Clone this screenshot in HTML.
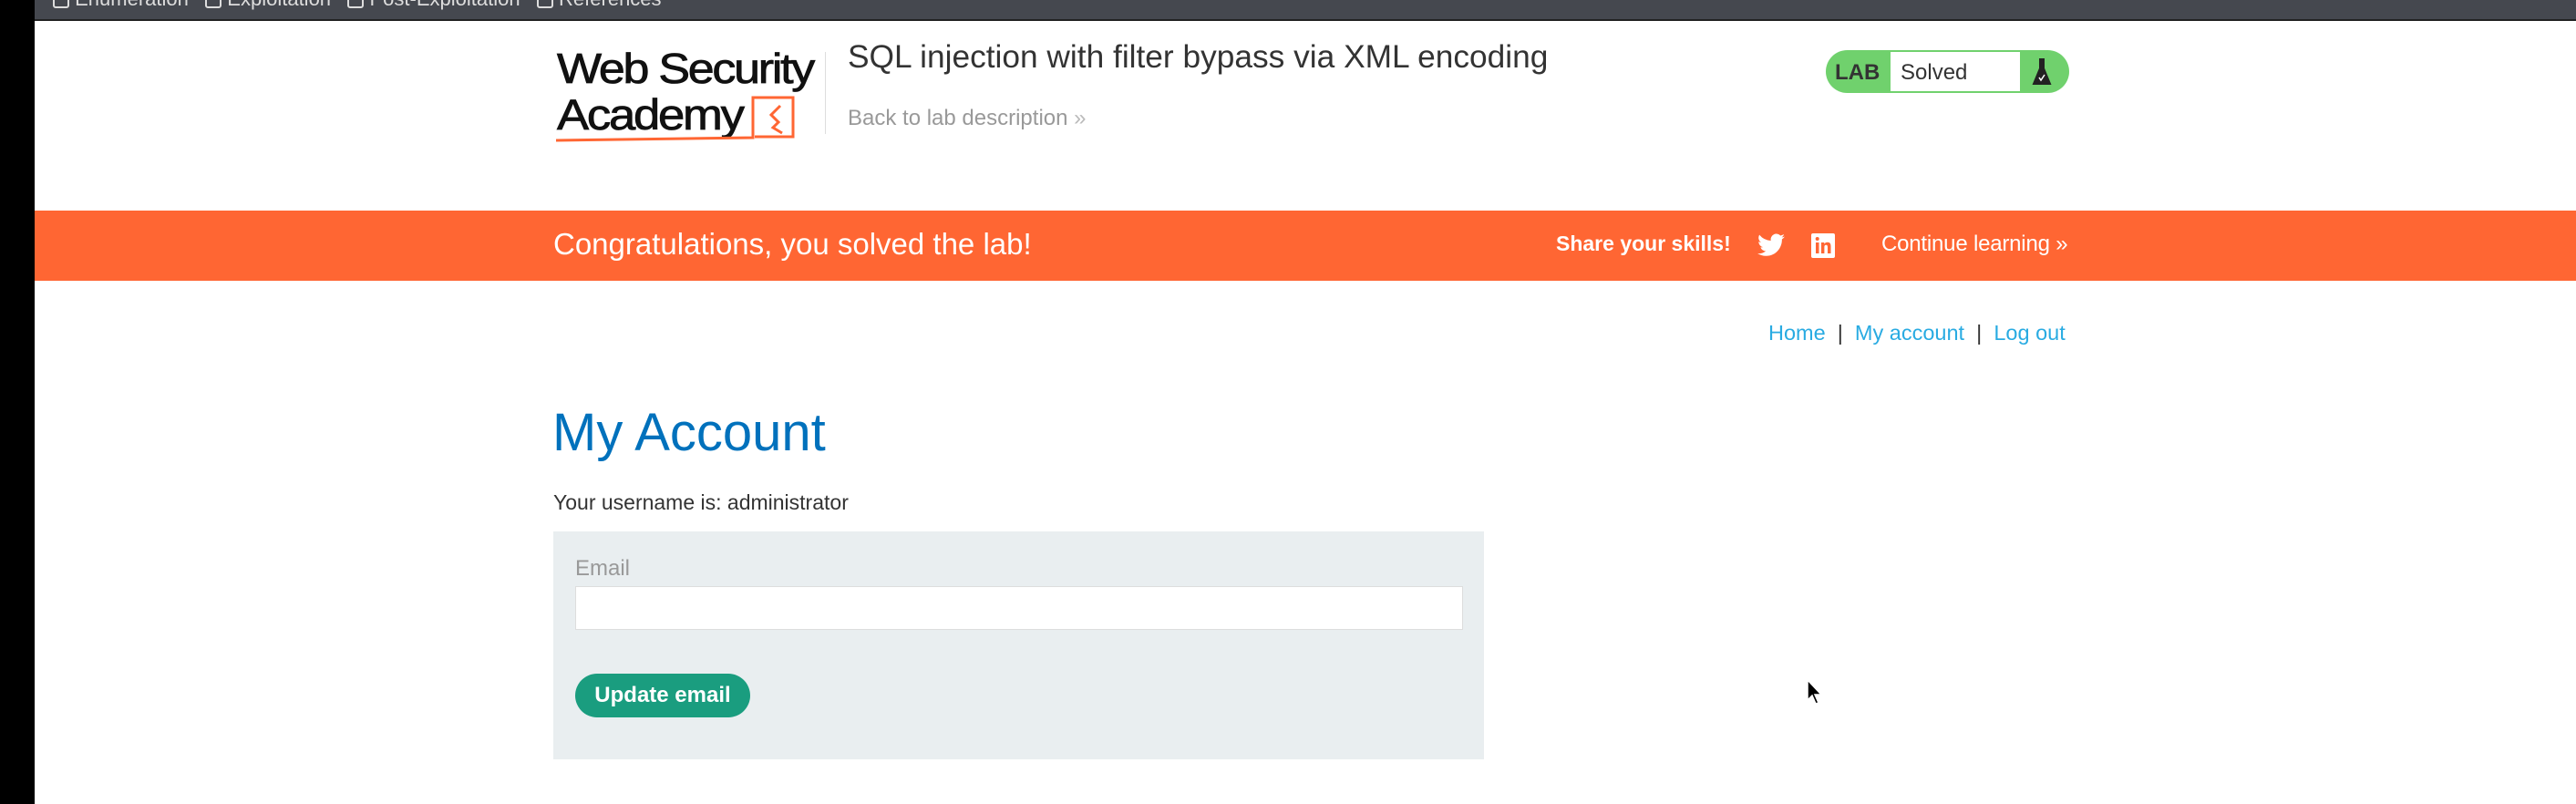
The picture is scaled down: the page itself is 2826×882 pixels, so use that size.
<!DOCTYPE html>
<html><head><meta charset="utf-8"><style>
*{margin:0;padding:0;box-sizing:border-box}
body{width:2826px;height:882px;background:#fff;position:relative;overflow:hidden;font-family:"Liberation Sans",sans-serif}
.a{position:absolute;white-space:nowrap}
</style></head><body>
<div class="a" style="left:0;top:0;width:38px;height:882px;background:#000"></div>
<div class="a" style="left:38px;top:0;width:2788px;height:23px;background:#45484f;border-bottom:2px solid #222"></div>
<div class="a" style="left:58px;top:-14px;font-size:22px;color:#ddd">
<span style="display:inline-block;width:18px;height:18px;border:2px solid #ddd;border-radius:3px;vertical-align:middle"></span> Enumeration&nbsp;&nbsp;
<span style="display:inline-block;width:18px;height:18px;border:2px solid #ddd;border-radius:3px;vertical-align:middle"></span> Exploitation&nbsp;&nbsp;
<span style="display:inline-block;width:18px;height:18px;border:2px solid #ddd;border-radius:3px;vertical-align:middle"></span> Post-Exploitation&nbsp;&nbsp;
<span style="display:inline-block;width:18px;height:18px;border:2px solid #ddd;border-radius:3px;vertical-align:middle"></span> References</div>

<div class="a" style="left:611px;top:52px;font-size:46px;letter-spacing:-2px;color:#111;line-height:46px;transform:scaleX(1.13);transform-origin:left;-webkit-text-stroke:0.8px #111">Web Security</div>
<div class="a" style="left:611px;top:102px;font-size:47px;letter-spacing:-2px;color:#111;line-height:47px;transform:scaleX(1.12);transform-origin:left;-webkit-text-stroke:0.8px #111">Academy</div>
<svg class="a" style="left:608px;top:104px" width="270" height="56"><path d="M2 50 L218 47 L218 3 L262 3 L262 46 L220 46" fill="none" stroke="#ff6633" stroke-width="3"/><path d="M248 12 L238 22 L246 30 L240 36 L250 42" fill="none" stroke="#ff6633" stroke-width="3"/></svg>
<div class="a" style="left:905px;top:57px;width:1px;height:90px;background:#ddd"></div>
<div class="a" style="left:930px;top:43px;font-size:35.3px;color:#333">SQL injection with filter bypass via XML encoding</div>
<div class="a" style="left:930px;top:116px;font-size:24px;color:#999">Back to lab description <span style="color:#bbb">»</span></div>

<div class="a" style="left:2003px;top:55px;width:267px;height:47px;background:#70d16d;border-radius:24px"></div>
<div class="a" style="left:2013px;top:66px;font-size:24px;font-weight:bold;color:#333">LAB</div>
<div class="a" style="left:2074px;top:57px;width:142px;height:43px;background:#fff"></div>
<div class="a" style="left:2085px;top:66px;font-size:24px;color:#333">Solved</div>
<svg class="a" style="left:2228px;top:63px" width="24" height="32"><path d="M9 2h6M10 2v10L3 29h18L14 12V2" fill="#222" stroke="#222" stroke-width="2"/><path d="M9 22l2 3 4-6" stroke="#fff" stroke-width="1.5" fill="none"/></svg>

<div class="a" style="left:38px;top:231px;width:2788px;height:77px;background:#ff6633"></div>
<div class="a" style="left:607px;top:249px;font-size:33px;color:#fff">Congratulations, you solved the lab!</div>
<div class="a" style="left:1707px;top:254px;font-size:23px;font-weight:bold;color:#fff">Share your skills!</div>
<svg class="a" style="left:1928px;top:256px" width="30" height="26" viewBox="0 0 24 20"><path fill="#fff" d="M24 2.4a10 10 0 0 1-2.8.8A5 5 0 0 0 23.3.4a10 10 0 0 1-3.1 1.2A4.9 4.9 0 0 0 11.8 6 14 14 0 0 1 1.7.9a4.9 4.9 0 0 0 1.5 6.6A4.9 4.9 0 0 1 1 6.9a4.9 4.9 0 0 0 3.9 4.8 5 5 0 0 1-2.2.1 4.9 4.9 0 0 0 4.6 3.4A9.9 9.9 0 0 1 0 17.2 14 14 0 0 0 7.5 19.4c9.1 0 14-7.5 14-14v-.6A10 10 0 0 0 24 2.4z"/></svg>
<svg class="a" style="left:1987px;top:256px" width="26" height="27" viewBox="0 0 26 27"><rect width="26" height="27" rx="2" fill="#fff"/><rect x="5" y="10" width="3.5" height="12" fill="#ff6633"/><circle cx="6.7" cy="6" r="2" fill="#ff6633"/><path d="M11 10h3.3v1.8c.7-1.2 2-2 3.6-2 3 0 3.6 2 3.6 4.6V22H18v-6.7c0-1.5-.3-2.6-1.8-2.6s-1.8 1.1-1.8 2.6V22H11z" fill="#ff6633"/></svg>
<div class="a" style="left:2064px;top:254px;font-size:24px;color:#fff;letter-spacing:-0.2px">Continue learning <span>»</span></div>

<div class="a" style="left:1940px;top:352px;font-size:23.5px;color:#29abe2">Home <span style="color:#333">&nbsp;|&nbsp;</span> My account <span style="color:#333">&nbsp;|&nbsp;</span> Log out</div>

<div class="a" style="left:606px;top:441px;font-size:58px;color:#0071bc">My Account</div>
<div class="a" style="left:607px;top:538px;font-size:23px;color:#333">Your username is: administrator</div>
<div class="a" style="left:607px;top:583px;width:1021px;height:250px;background:#e9eef0"></div>
<div class="a" style="left:631px;top:610px;font-size:24px;color:#999">Email</div>
<div class="a" style="left:631px;top:643px;width:974px;height:48px;background:#fff;border:1px solid #ddd"></div>
<div class="a" style="left:631px;top:739px;width:192px;height:48px;background:#1a9d7f;border-radius:24px;color:#fff;font-weight:bold;font-size:24px;line-height:48px;text-align:center">Update email</div>
<svg class="a" style="left:1982px;top:745px" width="20" height="30"><path d="M1 1v22l5-5 4 9 3-1-4-9h7z" fill="#000" stroke="#fff" stroke-width="1.5"/></svg>
</body></html>
